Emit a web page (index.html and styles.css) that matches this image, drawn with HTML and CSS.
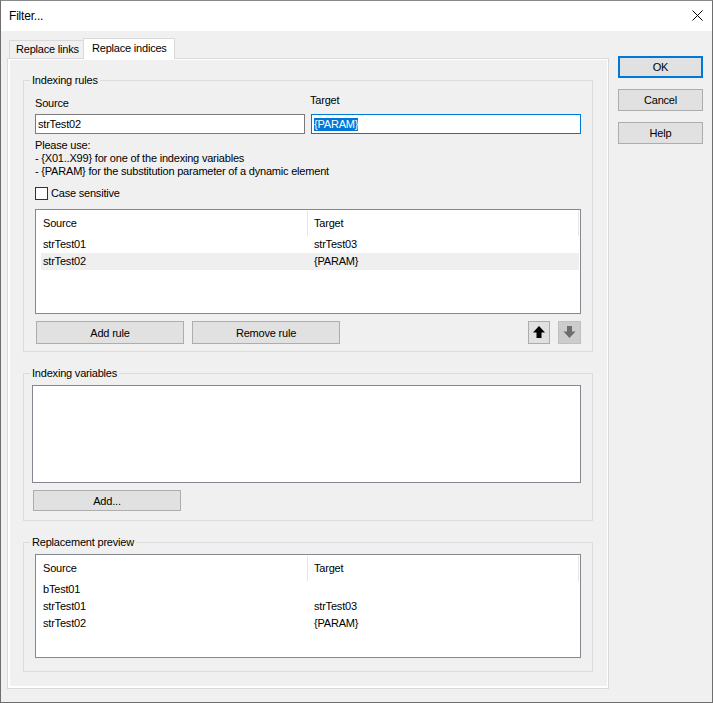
FILE: index.html
```html
<!DOCTYPE html>
<html>
<head>
<meta charset="utf-8">
<title>Filter...</title>
<link rel="stylesheet" href="styles.css">
</head>
<body>
<div class="window">
  <div class="titlebar">
    <span class="title">Filter...</span>
    <svg class="close" width="11" height="11" viewBox="0 0 11 11"><path d="M0.5 0.5 L10.5 10.5 M10.5 0.5 L0.5 10.5" stroke="#000" stroke-width="1" fill="none"/></svg>
  </div>
  <div class="client">
    <div class="tabctl">
      <div class="tabs">
        <div class="tab tab-links">Replace links</div>
        <div class="tab tab-active">Replace indices</div>
      </div>
      <div class="panel">
        <fieldset class="group">
          <legend>Indexing rules</legend>
          <div class="gbody gbody-rules">
            <div class="labels">
              <span class="lbl">Source</span>
              <span class="lbl lbl-target">Target</span>
            </div>
            <div class="inputs">
              <div class="input">strTest02</div>
              <div class="input input-focus"><span class="seltext">{PARAM}</span></div>
            </div>
            <div class="help">Please use:<br>- {X01..X99} for one of the indexing variables<br>- {PARAM} for the substitution parameter of a dynamic element</div>
            <div class="check"><span class="box"></span><span>Case sensitive</span></div>
            <div class="list rules-list">
              <div class="lhead"><div class="c1">Source</div><div class="c2">Target</div></div>
              <div class="row"><div class="c1">strTest01</div><div class="c2">strTest03</div></div>
              <div class="row row-sel"><div class="c1">strTest02</div><div class="c2">{PARAM}</div></div>
            </div>
            <div class="btnrow">
              <div class="btn btn-wide btn-add">Add rule</div>
              <div class="btn btn-wide btn-remove">Remove rule</div>
              <div class="btn btn-arrow btn-up">
                <svg width="20" height="21" viewBox="0 0 20 21"><polygon points="10,4 16,10.5 12.5,10.5 12.5,16 7.5,16 7.5,10.5 4,10.5" fill="#000"/></svg>
              </div>
              <div class="btn btn-arrow btn-down">
                <svg width="21" height="21" viewBox="0 0 21 21"><polygon points="10.5,16 16.5,9.5 13,9.5 13,4 8,4 8,9.5 4.5,9.5" fill="#6d6d6d"/></svg>
              </div>
            </div>
          </div>
        </fieldset>
        <fieldset class="group">
          <legend>Indexing variables</legend>
          <div class="gbody gbody-vars">
            <div class="varbox"></div>
            <div class="btn btn-wide btn-addvar">Add...</div>
          </div>
        </fieldset>
        <fieldset class="group">
          <legend>Replacement preview</legend>
          <div class="gbody gbody-preview">
            <div class="list preview-list">
              <div class="lhead"><div class="c1">Source</div><div class="c2">Target</div></div>
              <div class="row"><div class="c1">bTest01</div><div class="c2"></div></div>
              <div class="row"><div class="c1">strTest01</div><div class="c2">strTest03</div></div>
              <div class="row"><div class="c1">strTest02</div><div class="c2">{PARAM}</div></div>
            </div>
          </div>
        </fieldset>
      </div>
    </div>
    <div class="side">
      <div class="btn btn-side btn-default">OK</div>
      <div class="btn btn-side">Cancel</div>
      <div class="btn btn-side">Help</div>
    </div>
  </div>
</div>
</body>
</html>
```

FILE: styles.css
```css
* { box-sizing: border-box; }
html, body { margin: 0; padding: 0; }
body {
  font-family: "Liberation Sans", Arial, sans-serif;
  font-size: 11px;
  letter-spacing: -0.2px;
  color: #000;
  background: #f0f0f0;
}
.window {
  width: 713px;
  height: 703px;
  background: #f0f0f0;
  border: 1px solid #6e6e6e;
  border-top-color: #8a8a8a;
  display: flex;
  flex-direction: column;
  overflow: hidden;
}
.titlebar {
  height: 30px;
  background: #fff;
  display: flex;
  align-items: center;
  justify-content: space-between;
  padding: 0 9px 0 8px;
  flex: none;
}
.title { font-size: 12px; }
.close { display: block; margin-top: -1px; }

.client {
  flex: 1;
  display: flex;
  padding: 7px 0 0 6px;
}
.tabctl {
  width: 602px;
  display: flex;
  flex-direction: column;
  flex: none;
}
.tabs {
  display: flex;
  height: 20px;
  padding-left: 2px;
  align-items: flex-end;
}
.tab {
  border: 1px solid #d9d9d9;
  border-bottom: none;
  white-space: nowrap;
}
.tab-links {
  width: 74px;
  height: 18px;
  border-right: none;
  padding-left: 6px;
  line-height: 17px;
  background: #f0f0f0;
}
.tab-active {
  width: 92px;
  height: 21px;
  margin-bottom: -1px;
  padding-left: 8px;
  line-height: 18px;
  background: #fff;
  position: relative;
  z-index: 1;
}
.panel {
  border: 1px solid #d9d9d9;
  box-shadow: inset 2px -2px 0 #fff, inset -1px 1px 0 #fff;
  padding: 15px 15px 16px;
}

.group {
  margin: 0;
  padding: 0;
  min-width: 0;
  border: 1px solid #dcdcdc;
}
.group + .group { margin-top: 15px; }
.group legend {
  padding: 0 2px;
  margin-left: 6px;
  line-height: 13px;
}
.gbody-rules { padding: 10px 11px 7px; }
.gbody-vars { padding: 5px 11px 9px 8px; }
.gbody-preview { padding: 5px 11px 13px; }

.labels {
  display: flex;
  align-items: flex-end;
  line-height: 13px;
  height: 13px;
}
.lbl { width: 276px; }
.lbl-target { margin-bottom: 3px; padding-left: 2px; }

.inputs {
  display: flex;
  gap: 6px;
  margin-top: 4px;
}
.input {
  width: 270px;
  height: 20px;
  border: 1px solid #7a7a7a;
  background: #fff;
  padding-left: 2px;
  line-height: 18px;
  white-space: nowrap;
}
.input-focus { border-color: #0078d7; }
.seltext {
  display: inline-block;
  background: #0078d7;
  color: #fff;
  line-height: 13px;
  vertical-align: middle;
  margin-top: -1px;
}

.help {
  margin-top: 5px;
  line-height: 13px;
}
.check {
  display: flex;
  align-items: center;
  height: 13px;
  margin-top: 9px;
  line-height: 13px;
}
.box {
  width: 13px;
  height: 13px;
  border: 1px solid #333;
  background: #fff;
  margin-right: 3px;
}

.list {
  background: #fff;
  border: 1px solid #828790;
}
.rules-list { height: 105px; margin-top: 9px; }
.preview-list { height: 104px; }
.lhead {
  display: flex;
  height: 25px;
  margin-top: 1px;
  line-height: 25px;
}
.lhead .c1 { width: 271px; padding-left: 7px; }
.lhead .c2 {
  width: 272px;
  border-left: 1px solid #e5e5e5;
  border-right: 1px solid #e5e5e5;
  padding-left: 6px;
}
.row {
  display: flex;
  height: 17px;
  line-height: 17px;
  margin-left: 5px;
  width: 538px;
}
.row .c1 { width: 266px; padding-left: 2px; }
.row .c2 { padding-left: 7px; }
.row-sel { background: #efefef; }

.btn {
  background: #e1e1e1;
  border: 1px solid #adadad;
  display: flex;
  align-items: center;
  justify-content: center;
  white-space: nowrap;
}
.btnrow {
  display: flex;
  margin-top: 7px;
  height: 23px;
}
.btn-wide { width: 148px; height: 23px; }
.btn-add { margin-left: 1px; }
.btn-remove { margin-left: 8px; }
.btn-arrow { height: 23px; }
.btn-up { width: 22px; margin-left: auto; }
.btn-down {
  width: 23px;
  margin-left: 8px;
  background: #cccccc;
  border-color: #bfbfbf;
}
.btn-arrow svg { display: block; flex: none; }

.varbox {
  width: 549px;
  height: 98px;
  background: #fff;
  border: 1px solid #828790;
}
.btn-addvar {
  height: 21px;
  margin-top: 7px;
  margin-left: 1px;
}

.side {
  margin-left: 9px;
  padding-top: 18px;
  display: flex;
  flex-direction: column;
  gap: 11px;
}
.btn-side { width: 85px; height: 22px; }
.btn-default { border: 2px solid #0078d7; }
```
